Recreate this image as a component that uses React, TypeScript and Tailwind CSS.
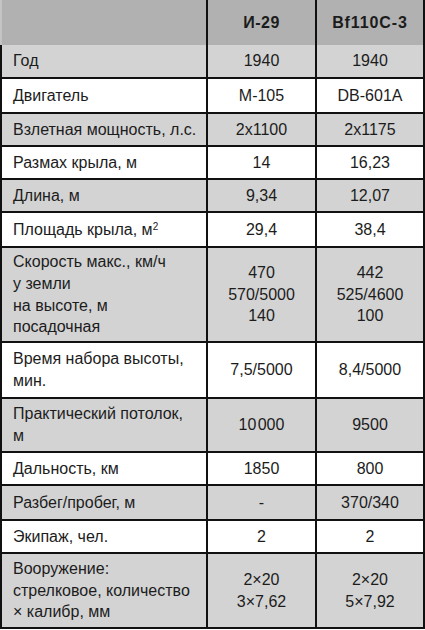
type Row = {
  label: React.ReactNode;
  a: React.ReactNode;
  b: React.ReactNode;
  h: string;
  grey: boolean;
};

const rows: Row[] = [
  { label: "Год", a: "1940", b: "1940", h: "h-[34px]", grey: true },
  { label: "Двигатель", a: "М-105", b: "DB-601A", h: "h-[35px]", grey: false },
  { label: "Взлетная мощность, л.с.", a: "2x1100", b: "2x1175", h: "h-[33px]", grey: true },
  { label: "Размах крыла, м", a: "14", b: "16,23", h: "h-[33px]", grey: false },
  { label: "Длина, м", a: "9,34", b: "12,07", h: "h-[33px]", grey: true },
  {
    label: (
      <>
        Площадь крыла, м<sup className="text-[10px]">2</sup>
      </>
    ),
    a: "29,4",
    b: "38,4",
    h: "h-[35px]",
    grey: false,
  },
  {
    label: (
      <>
        Скорость макс., км/ч
        <br />у земли
        <br />
        на высоте, м
        <br />
        посадочная
      </>
    ),
    a: (
      <>
        470
        <br />
        570/5000
        <br />
        140
      </>
    ),
    b: (
      <>
        442
        <br />
        525/4600
        <br />
        100
      </>
    ),
    h: "h-[95px]",
    grey: true,
  },
  {
    label: (
      <>
        Время набора высоты,
        <br />
        мин.
      </>
    ),
    a: "7,5/5000",
    b: "8,4/5000",
    h: "h-[56px]",
    grey: false,
  },
  {
    label: (
      <>
        Практический потолок,
        <br />м
      </>
    ),
    a: "10\u200A000",
    b: "9500",
    h: "h-[54px]",
    grey: true,
  },
  { label: "Дальность, км", a: "1850", b: "800", h: "h-[33px]", grey: false },
  { label: "Разбег/пробег, м", a: "-", b: "370/340", h: "h-[35px]", grey: true },
  { label: "Экипаж, чел.", a: "2", b: "2", h: "h-[33px]", grey: false },
  {
    label: (
      <>
        Вооружение:
        <br />
        стрелковое, количество
        <br />× калибр, мм
      </>
    ),
    a: (
      <>
        2×20
        <br />
        3×7,62
      </>
    ),
    b: (
      <>
        2×20
        <br />
        5×7,92
      </>
    ),
    h: "h-[75px]",
    grey: true,
  },
];

export default function App() {
  return (
    <div className="w-[425px] h-[630px] bg-white text-[#1c1c1c] text-[16px] leading-[21.7px] font-['Liberation_Sans',Arial,sans-serif]">
      {/* header */}
      <div className="grid grid-cols-[206px_109px_106px] h-[45px] bg-[#b1b1b1] border-l-2 border-r-2 border-l-[#c4c4c4] border-r-[#111]">
        <div className="border-r-2 border-[#111]" />
        <div className="border-r-2 border-[#111] flex items-center justify-center font-bold tracking-[0.5px]">
          И-29
        </div>
        <div className="flex items-center justify-center font-bold tracking-[0.9px]">Bf110C-3</div>
      </div>
      {rows.map((r, i) => (
        <div
          key={i}
          className={`grid grid-cols-[206px_109px_106px] ${r.h} border-l-2 border-r-2 border-b-2 border-[#111] ${
            r.grey ? "bg-[#d3d3d3]" : "bg-white"
          }`}
        >
          <div className="border-r-2 border-[#111] flex items-center pl-[11px]">
            <div>{r.label}</div>
          </div>
          <div className="border-r-2 border-[#111] flex items-center justify-center text-center">
            <div>{r.a}</div>
          </div>
          <div className="flex items-center justify-center text-center">
            <div>{r.b}</div>
          </div>
        </div>
      ))}
    </div>
  );
}
